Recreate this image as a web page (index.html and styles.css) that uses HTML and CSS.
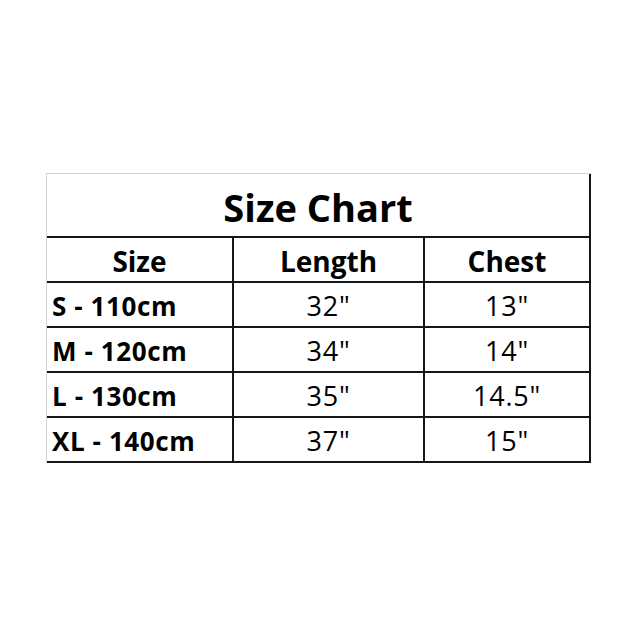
FILE: index.html
```html
<!DOCTYPE html>
<html>
<head>
<meta charset="utf-8">
<link rel="stylesheet" href="styles.css">
</head>
<body>
<div class="chart">
  <div class="cell title">Size Chart</div>
  <div class="cell head">Size</div>
  <div class="cell head">Length</div>
  <div class="cell head">Chest</div>
  <div class="cell label">S - 110cm</div>
  <div class="cell val">32"</div>
  <div class="cell val">13"</div>
  <div class="cell label">M - 120cm</div>
  <div class="cell val">34"</div>
  <div class="cell val">14"</div>
  <div class="cell label">L - 130cm</div>
  <div class="cell val">35"</div>
  <div class="cell val">14.5"</div>
  <div class="cell label">XL - 140cm</div>
  <div class="cell val">37"</div>
  <div class="cell val">15"</div>
</div>
</body>
</html>
```
FILE: styles.css
```css
html, body {
  margin: 0;
  padding: 0;
  background: #fff;
}
body {
  font-family: "Open Sans", Lato, "Liberation Sans", sans-serif;
  color: #000;
}
.chart {
  margin: 173px 0 0 46px;
  display: grid;
  grid-template-columns: 185px 189px 164px;
  grid-template-rows: 62px 43px 43px 43px 43px 43px;
  gap: 2px;
  background: #161616;
  border-top: 1px solid #d4d4d4;
  border-left: 1px solid #d4d4d4;
  padding: 0 2px 2px 0;
  box-sizing: border-box;
  width: 545px;
}
.cell {
  background: #fff;
  display: flex;
  align-items: flex-end;
  justify-content: center;
  line-height: 1;
}
.title {
  grid-column: 1 / 4;
  font-weight: 700;
  font-size: 38px;
  padding-bottom: 10px;
}
.head {
  font-weight: 700;
  font-size: 28px;
  padding-bottom: 6px;
}
.label {
  justify-content: flex-start;
  padding-left: 5px;
  font-weight: 700;
  font-size: 26px;
  letter-spacing: 0.6px;
  padding-bottom: 7px;
}
.val {
  font-weight: 400;
  font-size: 27px;
  letter-spacing: 0.8px;
  padding-bottom: 7px;
}
```
